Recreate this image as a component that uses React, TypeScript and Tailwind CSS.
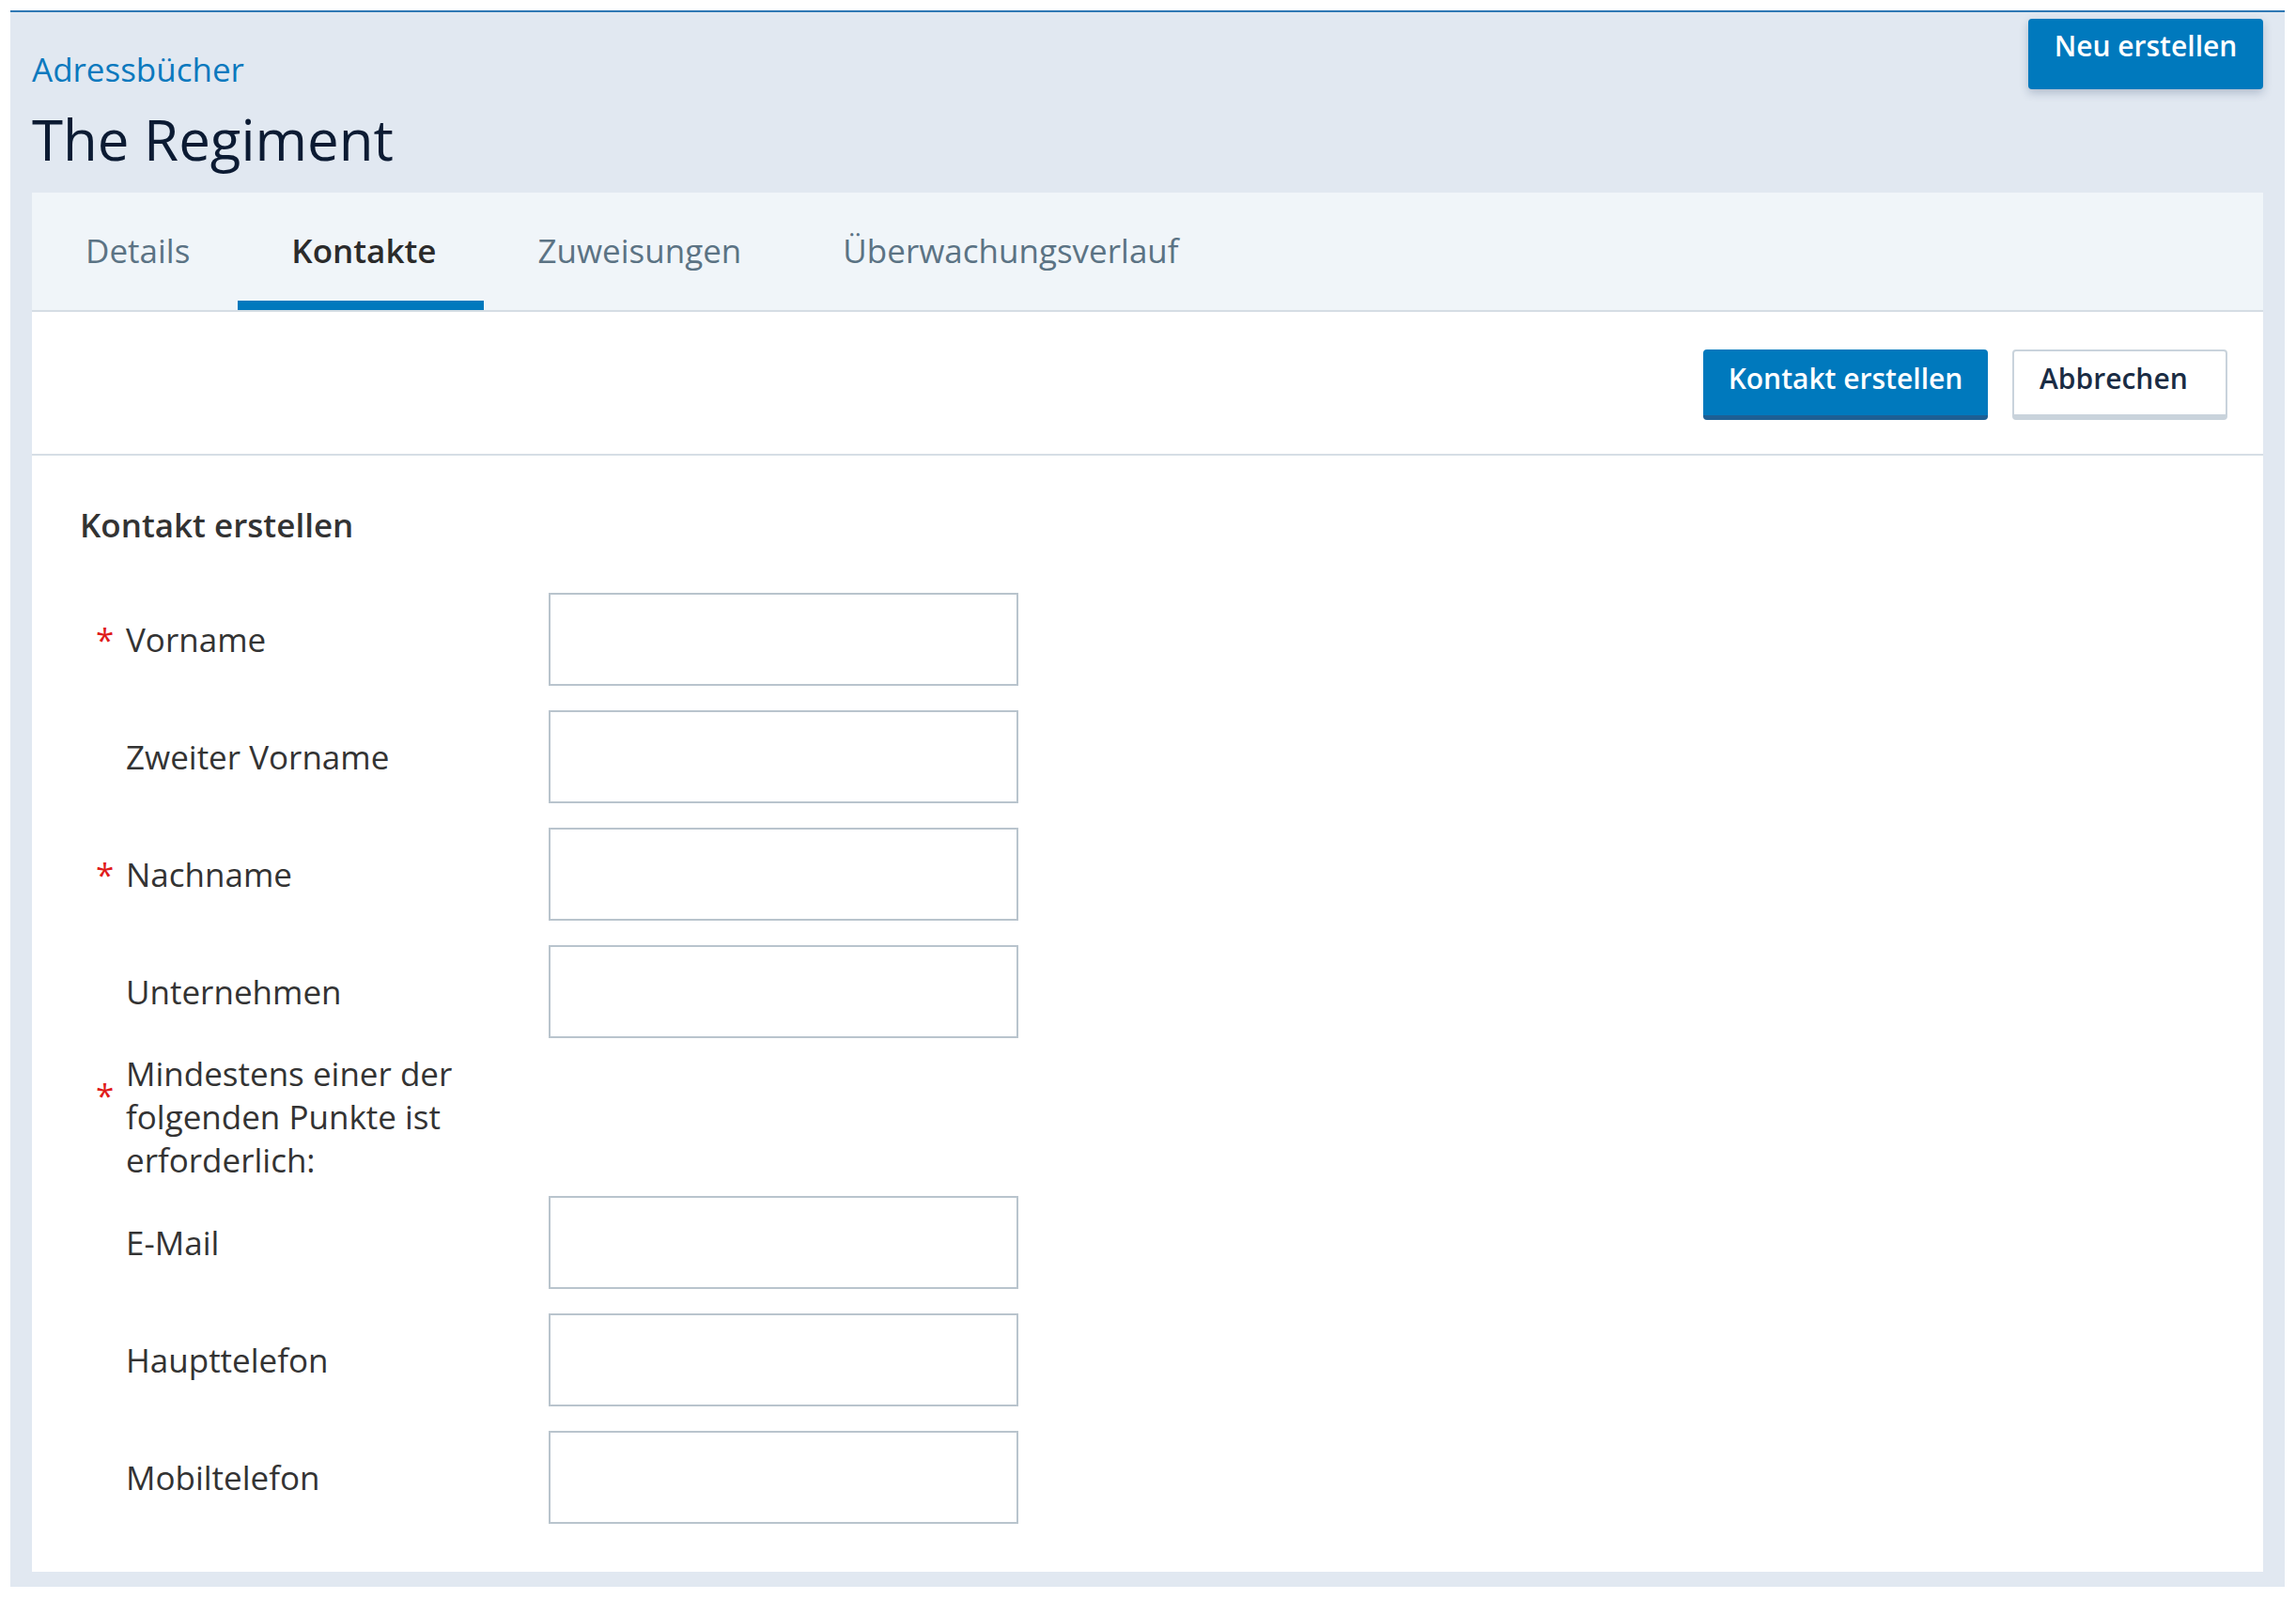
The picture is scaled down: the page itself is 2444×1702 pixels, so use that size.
import React from "react";

const font = { fontFamily: '"Open Sans", "Noto Sans", sans-serif' };

function Row({
  label,
  required,
  multiline,
}: {
  label: string;
  required?: boolean;
  multiline?: boolean;
}) {
  if (multiline) {
    return (
      <div className="flex items-start py-[2px] pl-[17px]">
        <span className="w-[32px] shrink-0 text-[35px] leading-[46px] text-[#e01b1b] mt-[23px]">
          {required ? "*" : ""}
        </span>
        <span className="w-[450px] shrink-0 pr-[80px] text-[35px] leading-[46px] text-[#333333]">
          {label}
        </span>
      </div>
    );
  }
  return (
    <div className="flex items-center py-[13px] pl-[17px]">
      <span className="w-[32px] shrink-0 text-[35px] leading-[46px] text-[#e01b1b]">
        {required ? "*" : ""}
      </span>
      <span className="w-[450px] shrink-0 text-[35px] leading-[46px] text-[#333333]">
        {label}
      </span>
      <input
        type="text"
        className="w-[500px] h-[99px] border-2 border-[#b9c4cd] bg-white outline-none"
      />
    </div>
  );
}

export default function App() {
  const tabs = ["Details", "Kontakte", "Zuweisungen", "Überwachungsverlauf"];
  return (
    <div className="w-[2444px] h-[1702px] bg-white pt-[11px] pl-[11px]" style={font}>
      <div className="w-[2421px] bg-[#e1e8f1] border-t-2 border-[#2f78b4] px-[23px] pb-[16px]">
        {/* Header */}
        <div className="flex justify-between items-start">
          <div className="pt-[37px]">
            <div className="text-[35px] leading-[47px] text-[#0b79be]">Adressbücher</div>
            <div className="mt-[10px] mb-[16px] text-[60px] leading-[82px] text-[#0c1b33]">
              The Regiment
            </div>
          </div>
          <button className="mt-[7px] w-[250px] h-[75px] rounded-[4px] bg-[#0079bd] text-white text-[30px] font-semibold leading-[41px] pt-[8px] self-start flex justify-center shadow-[0_4px_10px_rgba(30,60,100,0.25)]">
            Neu erstellen
          </button>
        </div>

        {/* Content panel */}
        <div className="bg-white">
          {/* Tabs */}
          <div className="flex bg-[#f0f5f9] border-b-2 border-[#d5dde4]">
            {tabs.map((t) => {
              const active = t === "Kontakte";
              return (
                <div
                  key={t}
                  className={
                    "h-[125px] pl-[57px] pr-[51px] pt-[38px] border-b-[10px] text-[35px] leading-[47px] " +
                    (active
                      ? "border-[#0079bd] text-[#2b2b2b] font-semibold"
                      : "border-transparent text-[#5b7384]")
                  }
                >
                  {t}
                </div>
              );
            })}
          </div>

          {/* Toolbar */}
          <div className="flex justify-end gap-[26px] pt-[40px] pb-[36px] pr-[38px] border-b-2 border-[#d6dee5]">
            <button className="w-[303px] h-[75px] rounded-[4px] bg-[#0079bd] border-b-[5px] border-[#1e5f94] text-white text-[30px] font-semibold leading-[41px] pt-[10px] flex justify-center">
              Kontakt erstellen
            </button>
            <button className="w-[229px] h-[75px] rounded-[4px] bg-white border-2 border-b-[6px] border-[#c9d3dc] text-[#1a2c44] text-[30px] font-semibold leading-[41px] pt-[8px] pl-[27px] flex justify-start">
              Abbrechen
            </button>
          </div>

          {/* Form */}
          <div className="pt-[50px] pl-[51px] pb-[38px]">
            <div className="text-[35px] leading-[47px] font-semibold text-[#333333] mb-[36px]">
              Kontakt erstellen
            </div>
            <Row label="Vorname" required />
            <Row label="Zweiter Vorname" />
            <Row label="Nachname" required />
            <Row label="Unternehmen" />
            <Row label="Mindestens einer der folgenden Punkte ist erforderlich:" required multiline />
            <Row label="E-Mail" />
            <Row label="Haupttelefon" />
            <Row label="Mobiltelefon" />
          </div>
        </div>
      </div>
    </div>
  );
}
